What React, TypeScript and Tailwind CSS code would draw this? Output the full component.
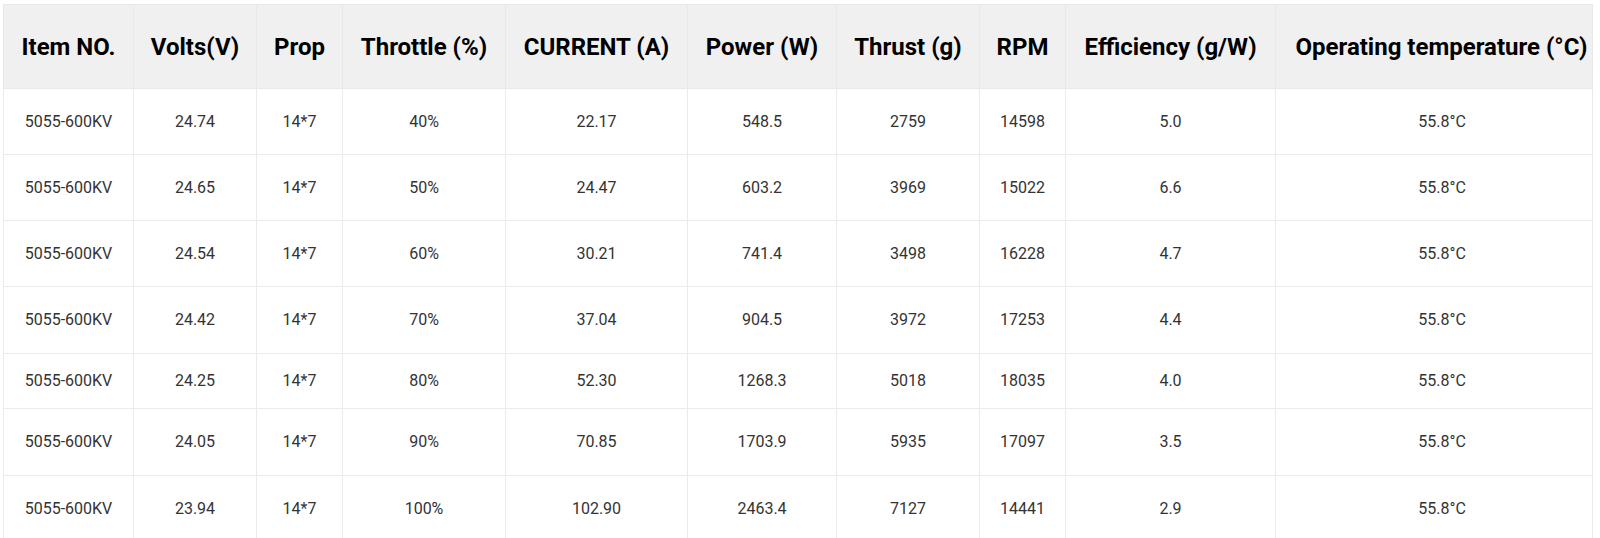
const headers = [
  "Item NO.",
  "Volts(V)",
  "Prop",
  "Throttle (%)",
  "CURRENT (A)",
  "Power (W)",
  "Thrust (g)",
  "RPM",
  "Efficiency (g/W)",
  "Operating temperature (°C)",
];

const widths = [130, 123, 86, 163, 182, 149, 143, 86, 210, 317];

const rows = [
  { h: "h-[66px]", cells: ["5055-600KV", "24.74", "14*7", "40%", "22.17", "548.5", "2759", "14598", "5.0", "55.8°C"] },
  { h: "h-[66px]", cells: ["5055-600KV", "24.65", "14*7", "50%", "24.47", "603.2", "3969", "15022", "6.6", "55.8°C"] },
  { h: "h-[66px]", cells: ["5055-600KV", "24.54", "14*7", "60%", "30.21", "741.4", "3498", "16228", "4.7", "55.8°C"] },
  { h: "h-[67px]", cells: ["5055-600KV", "24.42", "14*7", "70%", "37.04", "904.5", "3972", "17253", "4.4", "55.8°C"] },
  { h: "h-[55px]", cells: ["5055-600KV", "24.25", "14*7", "80%", "52.30", "1268.3", "5018", "18035", "4.0", "55.8°C"] },
  { h: "h-[67px]", cells: ["5055-600KV", "24.05", "14*7", "90%", "70.85", "1703.9", "5935", "17097", "3.5", "55.8°C"] },
  { h: "h-[66px]", cells: ["5055-600KV", "23.94", "14*7", "100%", "102.90", "2463.4", "7127", "14441", "2.9", "55.8°C"] },
];

const last = headers.length - 1;

export default function App() {
  return (
    <div className="w-[1600px] h-[538px] overflow-hidden bg-white pt-[4px] pl-[3px] font-['Roboto',sans-serif]">
      <table className="table-fixed border-collapse w-[1590px]">
        <colgroup>
          {widths.map((w, i) => (
            <col key={i} style={{ width: w }} />
          ))}
        </colgroup>
        <thead>
          <tr className="h-[84px] bg-[#f0f0f0]">
            {headers.map((h, i) => (
              <th
                key={h}
                className={`border border-[#e9e9e9] py-0 pr-0 text-center align-middle text-[24px] font-bold text-black whitespace-nowrap ${
                  i === last ? "pl-[15px]" : "pl-0"
                }`}
              >
                {h}
              </th>
            ))}
          </tr>
        </thead>
        <tbody>
          {rows.map((r, ri) => (
            <tr key={ri} className={r.h}>
              {r.cells.map((c, ci) => (
                <td
                  key={ci}
                  className={`border border-[#ebebeb] py-0 pr-0 text-center align-middle text-[16px] text-[#333] ${
                    ci === last ? "pl-[16px]" : "pl-0"
                  }`}
                >
                  {c}
                </td>
              ))}
            </tr>
          ))}
        </tbody>
      </table>
    </div>
  );
}
